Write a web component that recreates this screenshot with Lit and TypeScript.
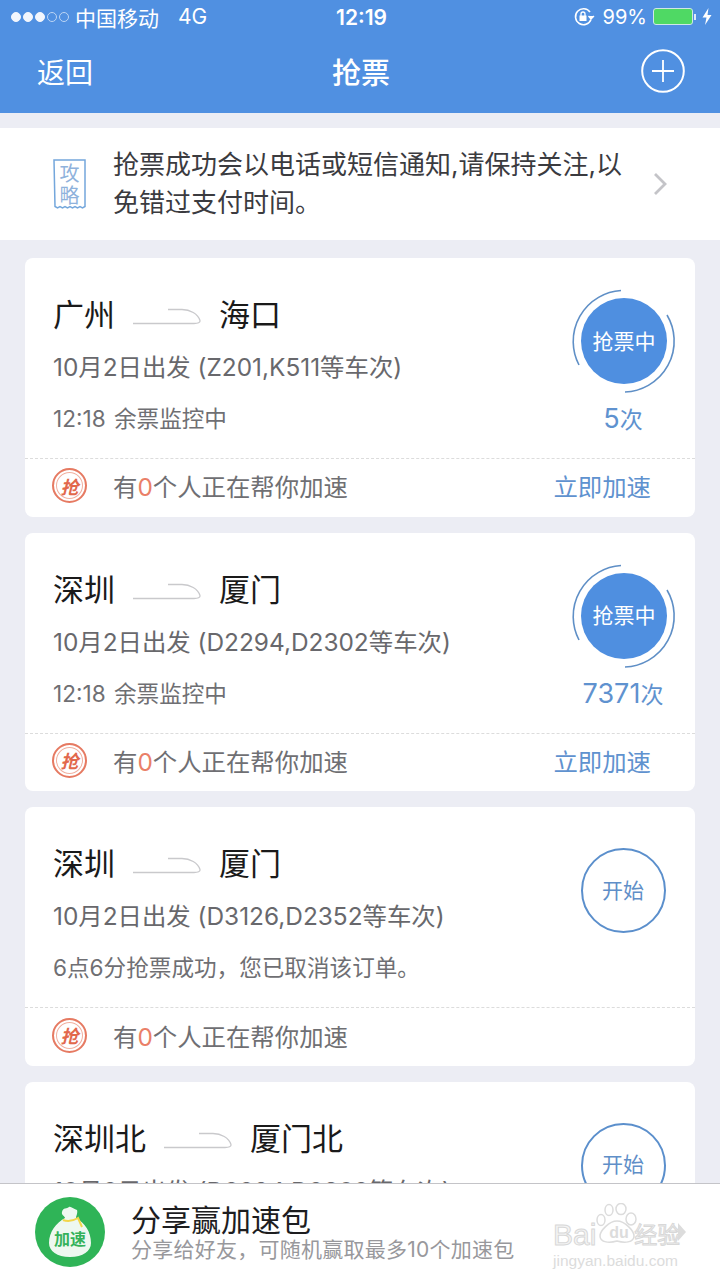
import { LitElement, html, css, svg } from "lit";
import { customElement } from "lit/decorators.js";

interface Ticket {
  from: string;
  to: string;
  sub: string;
  status: string;
  active: boolean;
  count?: string;
}

const TICKETS: Ticket[] = [
  { from: "广州", to: "海口", sub: "10月2日出发 (Z201,K511等车次)", status: "12:18 余票监控中", active: true, count: "5" },
  { from: "深圳", to: "厦门", sub: "10月2日出发 (D2294,D2302等车次)", status: "12:18 余票监控中", active: true, count: "7371" },
  { from: "深圳", to: "厦门", sub: "10月2日出发 (D3126,D2352等车次)", status: "6点6分抢票成功，您已取消该订单。", active: false },
  { from: "深圳北", to: "厦门北", sub: "10月2日出发 (D2294,D2302等车次)", status: "", active: false },
];

const train = svg`<svg class="train" width="70" height="20" viewBox="0 0 70 20" fill="none"><path d="M1 17.500H62C66 17.500 68.500 16.500 68 14.500C66 8 58 3.500 50 3.500H36" stroke="#c9c9cc" stroke-width="1.300"/></svg>`;

@customElement("app-root")
export class AppRoot extends LitElement {
  static styles = css`
    :host {
      display: block;
      width: 720px;
      height: 1280px;
      font-family: Inter, "Noto Sans CJK SC", sans-serif;
      background: #ecedf4;
      overflow: hidden;
    }
    .page { display: flex; flex-direction: column; height: 1280px; }
    .head { background: #5090e1; color: #fff; height: 113px; flex: none; }
    .status { height: 36px; display: grid; grid-template-columns: 1fr auto 1fr; align-items: center; padding: 0 8px 0 11px; font-size: 21px; }
    .status .left, .status .right { display: flex; align-items: center; margin-top: -3px; }
    .status .right { justify-content: flex-end; gap: 6px; }
    .dots { display: flex; gap: 2px; margin-right: 6px; margin-top: 1px; }
    .dot { width: 10px; height: 10px; border-radius: 50%; border: 1px solid #f2f6fd; background: #f2f6fd; box-sizing: border-box; }
    .dot.off { background: transparent; border-color: #bcd5f4; }
    .net { margin-left: 19px; }
    .pct { font-size: 20px; margin-left: 2px; }
    .time { font-size: 21px; font-weight: 600; margin-top: -1px; }
    .batt { display: flex; align-items: center; }
    .batt-body { width: 40px; height: 17px; background: #4fd964; border: 1px solid #cfe7e6; border-radius: 3px; box-sizing: border-box; }
    .batt-tip { width: 2px; height: 6px; background: #dfeaf8; margin-left: 1px; }
    .nav { height: 77px; display: grid; grid-template-columns: 1fr auto 1fr; align-items: center; padding: 0 35px 8px 37px; box-sizing: border-box; }
    .back { font-size: 28px; }
    .title { font-size: 29px; font-weight: 500; }
    .plus { justify-self: end; display: block; }

    .scroll { flex: 1; min-height: 0; overflow: hidden; padding-top: 15px; }
    .notice { background: #fff; height: 112px; display: flex; align-items: center; padding: 0 48px 0 53px; box-sizing: border-box; }
    .notice-icon-wrap { position: relative; width: 33px; height: 50px; margin-right: 27px; flex: none; }
    .notice-icon-wrap svg { display: block; }
    .glyphs { position: absolute; inset: 4px 0 0 0; display: flex; flex-direction: column; align-items: center; color: #8fb2dc; font-size: 20px; line-height: 22px; }
    .notice-text { flex: 1; font-size: 26px; line-height: 38px; color: #3b3b3f; margin-top: -1px; white-space: nowrap; }
    .chev { flex: none; margin: 0 5px 0 0; }

    .cards { padding: 18px 25px 0; display: flex; flex-direction: column; gap: 16px; }
    .card { background: #fff; border-radius: 8px; height: 258.670px; flex: none; display: flex; flex-direction: column; }
    .main { height: 201px; flex: none; box-sizing: border-box; padding: 0 29px 0 28px; display: flex; justify-content: space-between; border-bottom: 1px dashed #dcdcdc; }
    .route { display: flex; align-items: center; gap: 18px; font-size: 31px; line-height: 40px; color: #1a1a1a; margin-top: 37px; }
    .train { margin-top: 2px; margin-left: -1px; margin-right: -1px; display: block; }
    .sub { font-size: 24.400px; line-height: 32px; color: #68686c; margin-top: 16px; white-space: nowrap; }
    .state { font-size: 22.600px; line-height: 30px; color: #6f6f73; margin-top: 21px; white-space: nowrap; word-spacing: 2px; }
    .side { display: flex; flex-direction: column; align-items: center; width: 86px; flex: none; margin-top: 31px; }
    .ring { position: relative; width: 106px; height: 106px; margin: 0 -10px 0 -8px; flex: none; }
    .ring svg { display: block; }
    .ring-label { position: absolute; inset: 0 0 5px 0; display: flex; align-items: center; justify-content: center; color: #fff; font-size: 21px; }
    .count { font-size: 27px; line-height: 32px; color: #5f92cf; margin-top: 8px; white-space: nowrap; }
    .count small { font-size: 23px; }
    .start { width: 85px; height: 85px; margin-top: 10px; padding-bottom: 4px; box-sizing: border-box; border: 2px solid #5b8fcc; border-radius: 50%; display: flex; align-items: center; justify-content: center; color: #5f8fc8; font-size: 21px; }
    .foot { flex: 1; display: flex; align-items: center; padding: 0 44px 4px 27px; font-size: 24.400px; color: #6f6f73; }
    .badge { position: relative; width: 35px; height: 35px; box-sizing: border-box; border: 2px solid #e67a62; border-radius: 50%; box-shadow: inset 0 0 0 2px #fff, inset 0 0 0 3px #f0b0a0; display: flex; align-items: center; justify-content: center; color: #e2684c; font-size: 18px; font-weight: 700; font-style: italic; margin-right: 26px; flex: none; }
    .foot-text { flex: 1; }
    .zero { color: #ea7f68; }
    .speed { color: #5f92cf; }

    .bar { position: relative; flex: none; height: 97px; box-sizing: border-box; background: #fff; border-top: 1px solid #c4c4c8; display: flex; align-items: center; padding: 0 0 0 35px; }
    .bag { display: block; }
    .bag-wrap { position: relative; width: 70px; height: 70px; flex: none; margin-right: 26px; margin-top: -1px; }
    .bag-label { position: absolute; left: 0; right: 0; top: 32px; text-align: center; font-size: 16px; line-height: 20px; font-weight: 700; color: #35b25a; }
    .bar-title { font-size: 30px; line-height: 34px; color: #1d1d1f; }
    .bar-sub { font-size: 21px; line-height: 25px; color: #98989c; letter-spacing: 0.250px; white-space: nowrap; }
    .mark { position: absolute; left: 553px; top: 18px; width: 134px; height: 62px; color: #dcdcdc; display: flex; flex-direction: column; }
    .mark-top { display: flex; align-items: center; font-family: "Liberation Sans", "Noto Sans CJK SC", sans-serif; font-size: 30px; line-height: 30px; white-space: nowrap; margin-top: 18px; color: #f4f4f4; -webkit-text-stroke: 1px #d8d8d8; }
    .mark-gap { width: 38px; flex: none; }
    .mark-kn { font-size: 23px; }
    .mark-url { font-size: 15.500px; line-height: 16px; white-space: nowrap; margin-top: 3px; font-family: "Liberation Sans", sans-serif; }
    .paw { position: absolute; left: 43px; top: 1px; display: block; }
    .du { position: absolute; left: 54px; top: 21px; width: 24px; text-align: center; font-size: 16px; line-height: 20px; font-weight: 700; font-family: "Liberation Sans", sans-serif; }
    .mark-chev { position: absolute; left: 124px; top: 20px; display: block; }
  `;

  private ring() {
    return html`<div class="ring">
      <svg width="106" height="106" viewBox="0 0 106 106" fill="none">
        <circle cx="53" cy="52" r="43" fill="#4f8fe0"/>
        <path d="M50 1.500A51 51 0 0 0 8 76" stroke="#5f8fc6" stroke-width="1.600"/>
        <path d="M96 26A51 51 0 0 1 54 103" stroke="#5f8fc6" stroke-width="1.600"/>
      </svg>
      <div class="ring-label">抢票中</div>
    </div>`;
  }

  private card(t: Ticket) {
    return html`<div class="card">
      <div class="main">
        <div>
          <div class="route"><span>${t.from}</span>${train}<span>${t.to}</span></div>
          <div class="sub">${t.sub}</div>
          <div class="state">${t.status}</div>
        </div>
        <div class="side">
          ${t.active
            ? html`${this.ring()}<div class="count">${t.count}<small>次</small></div>`
            : html`<div class="start">开始</div>`}
        </div>
      </div>
      <div class="foot">
        <div class="badge">抢</div>
        <div class="foot-text">有<span class="zero">0</span>个人正在帮你加速</div>
        ${t.active ? html`<div class="speed">立即加速</div>` : ""}
      </div>
    </div>`;
  }

  render() {
    return html`<div class="page">
      <div class="head">
        <div class="status">
          <div class="left">
            <div class="dots">
              <i class="dot"></i><i class="dot"></i><i class="dot"></i><i class="dot off"></i><i class="dot off"></i>
            </div>
            <span>中国移动</span><span class="net">4G</span>
          </div>
          <div class="time">12:19</div>
          <div class="right">
            <svg width="22" height="20" viewBox="0 0 22 20" fill="none" stroke="#fff" stroke-width="1.600">
              <path d="M18 12.500A8 8 0 1 1 17 5"/>
              <path d="M21 9l-3 3-2.500-3" stroke-width="1.300" fill="#fff"/>
              <rect x="6.500" y="8.500" width="7" height="5.500" fill="#fff" stroke="none"/>
              <path d="M8 9V7a2 2 0 0 1 4 0v2" stroke-width="1.300"/>
            </svg>
            <span class="pct">99%</span>
            <div class="batt"><div class="batt-body"></div><div class="batt-tip"></div></div>
            <svg width="10" height="17" viewBox="0 0 10 17"><path d="M6.500 0L0.500 9.500H4.500L3 17L9.500 7H5.500Z" fill="#fff"/></svg>
          </div>
        </div>
        <div class="nav">
          <div class="back">返回</div>
          <div class="title">抢票</div>
          <svg class="plus" width="44" height="44" viewBox="0 0 44 44" fill="none" stroke="#fff">
            <circle cx="22" cy="22" r="20.800" stroke-width="2"/>
            <path d="M22 11V33M11 22H33" stroke-width="1.800"/>
          </svg>
        </div>
      </div>
      <div class="scroll">
        <div class="notice">
          <div class="notice-icon-wrap">
            <svg width="33" height="50" viewBox="0 0 33 50" fill="none">
              <path d="M1 1H32V47.500l-2.500 1.500-2.500-1.500-2.500 1.500-2.500-1.500-2.500 1.500-2.500-1.500-2.500 1.500-2.500-1.500-2.500 1.500-2.500-1.500-2.500 1.500-2.500-1.500Z" stroke="#74a7dc" stroke-width="1.500"/>
            </svg>
            <div class="glyphs"><span>攻</span><span>略</span></div>
          </div>
          <div class="notice-text">抢票成功会以电话或短信通知,请保持关注,以<br />免错过支付时间。</div>
          <svg class="chev" width="14" height="24" viewBox="0 0 14 24" fill="none"><path d="M2 2L12 12L2 22" stroke="#c4c4c8" stroke-width="2.800"/></svg>
        </div>
        <div class="cards">${TICKETS.map((t) => this.card(t))}</div>
      </div>
      <div class="bar">
        <div class="bag-wrap">
          <svg class="bag" width="70" height="70" viewBox="0 0 70 70">
            <circle cx="35" cy="35" r="35" fill="#2fb457"/>
            <path d="M27 15C28 10 32 12 34 10C36 9 38 12 42 13C43 16 41 19 41 21C50 26 56 35 56 46C56 54 48 60 35 60C22 60 14 54 14 46C14 35 21 26 30 21C30 19 26 18 27 15Z" fill="#eef8f0"/>
            <path d="M28 23C33 25 38 24 43 21L47 30" stroke="#f3d64a" stroke-width="2" fill="none"/>
          </svg>
          <div class="bag-label">加速</div>
        </div>
        <div>
          <div class="bar-title">分享赢加速包</div>
          <div class="bar-sub">分享给好友，可随机赢取最多10个加速包</div>
        </div>
        <div class="mark">
          <svg class="paw" width="42" height="42" viewBox="0 0 42 42" fill="none" stroke="#dcdcdc" stroke-width="1.500">
            <ellipse cx="13" cy="7" rx="4" ry="5.500"/><ellipse cx="25" cy="6" rx="5" ry="5.500"/>
            <ellipse cx="5" cy="17" rx="4" ry="5.500"/><ellipse cx="35" cy="16" rx="5" ry="6"/>
            <path d="M21 18C13 18 4 28 4 33C4 40 14 40 21 38C28 40 38 40 38 33C38 28 29 18 21 18Z"/>
          </svg>
          <div class="du">du</div>
          <div class="mark-top"><span>Bai</span><span class="mark-gap"></span><span class="mark-kn">经验</span></div>
          <svg class="mark-chev" width="10" height="20" viewBox="0 0 10 20"><path d="M1 1L9 10L1 19Z" fill="#dcdcdc"/></svg>
          <div class="mark-url">jingyan.baidu.com</div>
        </div>
      </div>
    </div>`;
  }
}
